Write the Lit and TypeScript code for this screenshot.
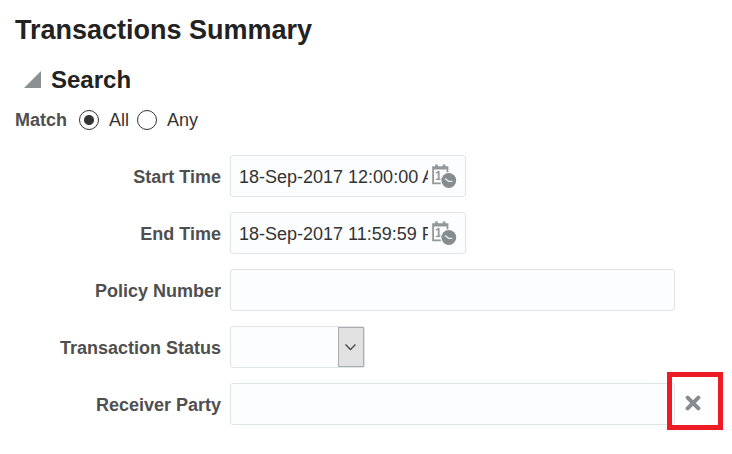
import { LitElement, html, css } from "lit";
import { customElement, property, state } from "lit/decorators.js";

@customElement("date-time-field")
export class DateTimeField extends LitElement {
  @property() label = "";
  @property() value = "";

  static styles = css`
    :host {
      display: contents;
    }
    .label {
      grid-column: 1;
      padding: 2px 9px 0 0;
      text-align: right;
      font-weight: bold;
      color: #4f4f4f;
    }
    .box {
      box-sizing: border-box;
      display: flex;
      align-items: center;
      gap: 4px;
      width: 236px;
      height: 42px;
      padding: 0 8px;
      border: 1px solid #dfe4e7;
      border-radius: 3px;
      background: #fcfdfe;
      grid-column: 2 / -1;
    }
    .input {
      box-sizing: border-box;
      flex: 1;
      min-width: 0;
      height: 40px;
      padding: 2px 0 0;
      border: 0;
      outline: 0;
      background: none;
      font: inherit;
      color: #333;
    }
    .pick {
      display: block;
      flex: none;
      width: 25px;
      height: 25px;
      padding: 0;
      border: 0;
      background: none;
    }
    .icon {
      display: block;
    }
    .day {
      font: bold 12px "Liberation Sans", sans-serif;
    }
  `;

  render() {
    return html`
      <label class="label" for="value">${this.label}</label>
      <div class="box">
        <input class="input" id="value" type="text" .value=${this.value} />
        <button class="pick" type="button" aria-label="Select date and time">
          <svg class="icon" width="25" height="25" viewBox="0 0 25 25">
            <path
              d="M0.2 2.2H16.4V10H14.6V5.6H2V18.4H9V20.2H0.2ZM3.2 0.4H5.8V4H3.2ZM10.8 0.4H13.4V4H10.8Z"
              fill="#92979a"
            />
            <text class="day" x="3" y="16" fill="#92979a">1</text>
            <circle cx="16.8" cy="16.5" r="8.6" fill="#fcfdfe" />
            <circle cx="16.8" cy="16.5" r="7.4" fill="#868c8f" />
            <path d="M13 14.5L16.6 17.4H20.4" fill="none" stroke="#e8eaeb" stroke-width="1.4" />
          </svg>
        </button>
      </div>
    `;
  }
}

@customElement("app-root")
export class AppRoot extends LitElement {
  @state() private receiver = "";

  static styles = css`
    :host {
      display: block;
      padding: 14px 9px 28px 15px;
      background: #fff;
      font: 18px/20px "Liberation Sans", Arial, sans-serif;
      color: #333;
    }
    .title {
      margin: 0 0 20px;
      font-size: 27px;
      line-height: 32px;
      color: #222;
    }
    .section {
      margin: 0 0 16px;
      padding-left: 9px;
      font-size: 24px;
      line-height: 28px;
      color: #222;
    }
    .toggle {
      display: flex;
      align-items: center;
      gap: 10px;
      padding: 0;
      border: 0;
      background: none;
      font: inherit;
      color: inherit;
    }
    .match {
      display: flex;
      align-items: center;
      margin: 0 0 25px;
    }
    .legend {
      margin-right: 12px;
      font-weight: bold;
      color: #4f4f4f;
    }
    .option {
      display: flex;
      align-items: center;
      gap: 10px;
      margin-right: 8px;
    }
    .radio {
      appearance: none;
      box-sizing: border-box;
      width: 20px;
      height: 20px;
      margin: 0;
      border: 1px solid #333;
      border-radius: 50%;
      background: #fff;
    }
    .radio:checked {
      background: radial-gradient(circle, #333 4.5px, #fff 5.5px);
    }
    .fields {
      display: grid;
      grid-template-columns: 215px 1fr 48px;
      row-gap: 15px;
      align-items: center;
    }
    .label {
      grid-column: 1;
      padding: 2px 9px 0 0;
      text-align: right;
      font-weight: bold;
      color: #4f4f4f;
    }
    .input,
    .select {
      box-sizing: border-box;
      width: 100%;
      height: 42px;
      margin: 0;
      padding: 2px 8px 0;
      border: 1px solid #dfe4e7;
      border-radius: 3px;
      background: #fcfdfe;
      font: inherit;
      color: inherit;
    }
    .input {
      grid-column: 2;
    }
    .drop {
      display: grid;
      width: 135px;
    }
    .select {
      appearance: none;
      grid-area: 1 / 1;
    }
    .arrow {
      box-sizing: border-box;
      display: grid;
      place-items: center;
      grid-area: 1 / 1;
      justify-self: end;
      width: 26px;
      height: 40px;
      margin: 1px 1px 1px 0;
      border: 1px solid #adadad;
      background: #e1e1e1;
      pointer-events: none;
    }
    .status {
      grid-column: 2 / -1;
    }
    .clear-cell {
      position: relative;
      display: flex;
      align-items: center;
      height: 40px;
      padding: 0 0 2px 10px;
    }
    .highlight {
      position: absolute;
      inset: -11px 0 -5px -8px;
      border: 5px solid #ed1c24;
      pointer-events: none;
    }
    .clear {
      padding: 0;
      border: 0;
      background: none;
    }
    .icon {
      display: block;
    }
  `;

  render() {
    return html`
      <h1 class="title">Transactions Summary</h1>
      <h2 class="section">
        <button class="toggle" type="button" aria-expanded="true">
          <svg class="icon" width="17" height="18" viewBox="0 0 17 18">
            <path d="M17 0V17H0Z" fill="#8b9093" />
          </svg>
          Search
        </button>
      </h2>
      <div class="match" role="radiogroup" aria-labelledby="match">
        <span class="legend" id="match">Match</span>
        <label class="option">
          <input class="radio" type="radio" name="match" value="all" checked />All
        </label>
        <label class="option">
          <input class="radio" type="radio" name="match" value="any" />Any
        </label>
      </div>
      <form class="fields">
        <date-time-field label="Start Time" value="18-Sep-2017 12:00:00 AM"></date-time-field>
        <date-time-field label="End Time" value="18-Sep-2017 11:59:59 PM"></date-time-field>

        <label class="label" for="policy">Policy Number</label>
        <input class="input" id="policy" type="text" />

        <label class="label" for="status">Transaction Status</label>
        <div class="status">
          <div class="drop">
            <select class="select" id="status">
              <option></option>
            </select>
            <span class="arrow">
              <svg class="icon" width="12" height="8" viewBox="0 0 12 8">
                <path d="M0.5 1.5L5.5 6.5L10.5 1.5" fill="none" stroke="#444" stroke-width="1.3" />
              </svg>
            </span>
          </div>
        </div>

        <label class="label" for="receiver">Receiver Party</label>
        <input
          class="input"
          id="receiver"
          type="text"
          .value=${this.receiver}
          @input=${(e: Event) => (this.receiver = (e.target as HTMLInputElement).value)}
        />
        <div class="clear-cell">
          <button
            class="clear"
            type="button"
            aria-label="Clear"
            @click=${() => (this.receiver = "")}
          >
            <svg class="icon" width="16" height="16" viewBox="0 0 16 16">
              <path
                d="M2.6 2.6L13.4 13.4M13.4 2.6L2.6 13.4"
                fill="none"
                stroke="#868c8f"
                stroke-width="4"
                stroke-linecap="round"
              />
            </svg>
          </button>
          <span class="highlight"></span>
        </div>
      </form>
    `;
  }
}
